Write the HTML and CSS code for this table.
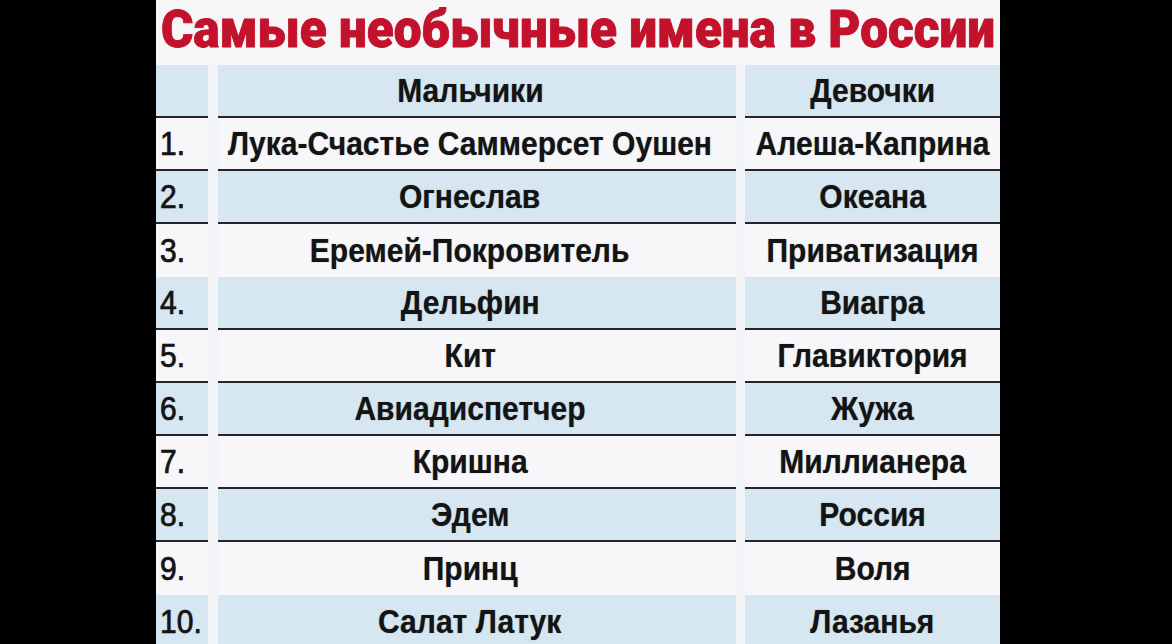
FILE: index.html
```html
<!DOCTYPE html>
<html lang="ru">
<head>
<meta charset="utf-8">
<title>Самые необычные имена в России</title>
<link rel="stylesheet" href="styles.css">
</head>
<body>
<div class="sheet">
  <h1 class="title"><span class="title-text">Самые необычные имена в России</span></h1>
  <div class="table">
    <div class="row blue lined">
      <div class="cell num"></div><div class="gap"></div>
      <div class="cell name"><span class="t">Мальчики</span></div><div class="gap"></div>
      <div class="cell name girl"><span class="t">Девочки</span></div>
    </div>
    <div class="row lined">
      <div class="cell num"><span class="t">1.</span></div><div class="gap"></div>
      <div class="cell name"><span class="t">Лука-Счастье Саммерсет Оушен</span></div><div class="gap"></div>
      <div class="cell name girl"><span class="t">Алеша-Каприна</span></div>
    </div>
    <div class="row blue lined">
      <div class="cell num"><span class="t">2.</span></div><div class="gap"></div>
      <div class="cell name"><span class="t">Огнеслав</span></div><div class="gap"></div>
      <div class="cell name girl"><span class="t">Океана</span></div>
    </div>
    <div class="row">
      <div class="cell num"><span class="t">3.</span></div><div class="gap"></div>
      <div class="cell name"><span class="t">Еремей-Покровитель</span></div><div class="gap"></div>
      <div class="cell name girl"><span class="t">Приватизация</span></div>
    </div>
    <div class="row blue lined">
      <div class="cell num"><span class="t">4.</span></div><div class="gap"></div>
      <div class="cell name"><span class="t">Дельфин</span></div><div class="gap"></div>
      <div class="cell name girl"><span class="t">Виагра</span></div>
    </div>
    <div class="row lined">
      <div class="cell num"><span class="t">5.</span></div><div class="gap"></div>
      <div class="cell name"><span class="t">Кит</span></div><div class="gap"></div>
      <div class="cell name girl"><span class="t">Главиктория</span></div>
    </div>
    <div class="row blue lined">
      <div class="cell num"><span class="t">6.</span></div><div class="gap"></div>
      <div class="cell name"><span class="t">Авиадиспетчер</span></div><div class="gap"></div>
      <div class="cell name girl"><span class="t">Жужа</span></div>
    </div>
    <div class="row lined">
      <div class="cell num"><span class="t">7.</span></div><div class="gap"></div>
      <div class="cell name"><span class="t">Кришна</span></div><div class="gap"></div>
      <div class="cell name girl"><span class="t">Миллианера</span></div>
    </div>
    <div class="row blue lined">
      <div class="cell num"><span class="t">8.</span></div><div class="gap"></div>
      <div class="cell name"><span class="t">Эдем</span></div><div class="gap"></div>
      <div class="cell name girl"><span class="t">Россия</span></div>
    </div>
    <div class="row">
      <div class="cell num"><span class="t">9.</span></div><div class="gap"></div>
      <div class="cell name"><span class="t">Принц</span></div><div class="gap"></div>
      <div class="cell name girl"><span class="t">Воля</span></div>
    </div>
    <div class="row blue">
      <div class="cell num"><span class="t">10.</span></div><div class="gap"></div>
      <div class="cell name"><span class="t">Салат Латук</span></div><div class="gap"></div>
      <div class="cell name girl"><span class="t">Лазанья</span></div>
    </div>
  </div>
</div>
</body>
</html>
```
FILE: styles.css
```css
html, body {
  margin: 0;
  padding: 0;
  background: #000;
  height: 644px;
  overflow: hidden;
}
.sheet {
  margin-left: 156px;
  width: 844px;
  height: 644px;
  background: #f7f7f9;
  overflow: hidden;
}
.title {
  margin: 0;
  height: 65px;
  padding-bottom: 6px;
  box-sizing: border-box;
  display: flex;
  align-items: center;
  justify-content: center;
  font-family: Roboto, "Liberation Sans", sans-serif;
  font-weight: 900;
  font-size: 51px;
  color: #c3122c;
  line-height: 1;
}
.title-text {
  display: inline-block;
  transform: scaleX(0.97);
  white-space: nowrap;
  -webkit-text-stroke: 0.8px #c3122c;
  text-shadow: 0 0 1px rgba(195, 18, 44, 0.6);
}
.table {
  display: flex;
  flex-direction: column;
}
.row {
  display: grid;
  grid-template-columns: 52px 10px 518px 9px 255px;
  height: 53px;
}
.cell {
  display: flex;
  align-items: center;
  box-sizing: border-box;
  font-family: "Liberation Sans", Arial, sans-serif;
  font-weight: 700;
  font-size: 33px;
  color: #141414;
  background: #f7f7f9;
}
.row.blue .cell {
  background: #d6e7f2;
}
.row.lined .cell {
  border-bottom: 2px solid #26262a;
}
.gap {
  background: #f3f4f7;
}
.num {
  padding-left: 4px;
  justify-content: flex-start;
  font-weight: 400;
}
.num .t {
  transform-origin: left center;
  -webkit-text-stroke: 0.6px #141414;
}
.name {
  justify-content: center;
  padding-right: 14px;
}
.name.girl {
  padding-right: 0;
}
.t {
  display: inline-block;
  white-space: nowrap;
  transform: scaleX(0.91);
  text-shadow: 0 0 1px rgba(20, 20, 20, 0.5);
}
```
